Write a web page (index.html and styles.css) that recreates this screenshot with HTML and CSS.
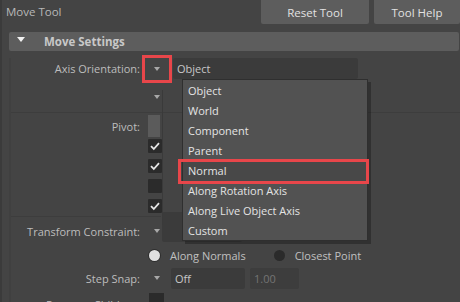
FILE: index.html
```html
<!DOCTYPE html>
<html>
<head>
<meta charset="utf-8">
<link rel="stylesheet" href="styles.css">
</head>
<body>
<div class="window">
  <div class="header">
    <div class="title">Move Tool</div>
    <button class="btn btn-reset">Reset Tool</button>
    <button class="btn btn-help">Tool Help</button>
  </div>
  <div class="section">
    <div class="section-bar"><span class="caret-down"></span><span class="section-title">Move Settings</span></div>
    <div class="content">
      <div class="row row-axis">
        <div class="label">Axis Orientation:</div>
        <div class="arrow-cell"><span class="arrow"></span></div>
        <div class="field field-object">Object</div>
      </div>
      <div class="row row-sub">
        <div class="label"></div>
        <div class="arrow-cell"><span class="arrow"></span></div>
      </div>
      <div class="sep"></div>
      <div class="row row-pivot">
        <div class="label">Pivot:</div>
        <div class="pivot-box"></div>
      </div>
      <div class="checks">
        <div class="check on"><svg viewBox="0 0 14 14" width="14" height="14"><path d="M3 7.2 L5.8 10 L11 4.2" fill="none" stroke="#e6e6e6" stroke-width="1.8"/></svg></div>
        <div class="check on"><svg viewBox="0 0 14 14" width="14" height="14"><path d="M3 7.2 L5.8 10 L11 4.2" fill="none" stroke="#e6e6e6" stroke-width="1.8"/></svg></div>
        <div class="check"></div>
        <div class="check on"><svg viewBox="0 0 14 14" width="14" height="14"><path d="M3 7.2 L5.8 10 L11 4.2" fill="none" stroke="#e6e6e6" stroke-width="1.8"/></svg></div>
      </div>
      <div class="sep sep2"></div>
      <div class="row row-tc">
        <div class="label">Transform Constraint:</div>
        <div class="arrow-cell"><span class="arrow"></span></div>
        <div class="field field-tc"></div>
      </div>
      <div class="row row-radio">
        <div class="label"></div>
        <div class="radio-group">
          <span class="radio light"></span><span class="radio-text">Along Normals</span>
          <span class="radio dark"></span><span class="radio-text">Closest Point</span>
        </div>
      </div>
      <div class="row row-snap">
        <div class="label">Step Snap:</div>
        <div class="arrow-cell"><span class="arrow"></span></div>
        <div class="field field-off">Off</div>
        <div class="field field-num">1.00</div>
      </div>
      <div class="row row-preserve">
        <div class="label">Preserve Children:</div>
        <div class="small-check"></div>
      </div>
      <div class="vline"></div>
    </div>
  </div>

  <div class="menu">
    <div class="item">Object</div>
    <div class="item">World</div>
    <div class="item">Component</div>
    <div class="item">Parent</div>
    <div class="item item-sel">Normal</div>
    <div class="item">Along Rotation Axis</div>
    <div class="item">Along Live Object Axis</div>
    <div class="item">Custom</div>
  </div>
  <div class="hl hl-arrow"></div>
  <div class="hl hl-normal"></div>
</div>
</body>
</html>
```
FILE: styles.css
```css
* { box-sizing: border-box; }
html, body {
  margin: 0;
  padding: 0;
  background: #444444;
  width: 460px;
  height: 302px;
  overflow: hidden;
}
body {
  font-family: "Open Sans", "Noto Sans", "Liberation Sans", sans-serif;
  font-size: 11px;
  color: #bdbdbd;
}
.window {
  position: relative;
  width: 460px;
  height: 302px;
  overflow: hidden;
  border-left: 2px solid #3b3b3b;
}
.header {
  display: flex;
  height: 24px;
  align-items: stretch;
}
.title {
  flex: 1;
  padding: 4px 0 0 4px;
  color: #b8b8b8;
  font-size: 11.5px;
}
.btn {
  border: none;
  background: #5d5d5d;
  color: #e2e2e2;
  font-family: inherit;
  font-size: 11.5px;
  padding: 0;
  border-radius: 0 0 2px 2px;
}
.btn-reset { width: 108px; margin-right: 5px; }
.btn-help { width: 86px; }
.section {
  margin: 8px 1px 0 7px;
}
.section-bar {
  height: 19px;
  background: #5d5d5d;
  border-radius: 2px;
  display: flex;
  align-items: center;
  font-weight: bold;
  color: #c8c8c8;
  font-size: 11.5px;
}
.caret-down {
  width: 0;
  height: 0;
  border-left: 4px solid transparent;
  border-right: 4px solid transparent;
  border-top: 5px solid #f2f2f2;
  margin: 0 0 4px 8px;
}
.section-title { margin-left: 19px; }
.content {
  position: relative;
  padding-left: 3px;
  border-left: 2px solid #404040;
  height: 260px;
}
.row {
  display: flex;
  align-items: center;
}
.label {
  width: 126px;
  text-align: right;
  flex: none;
  white-space: nowrap;
}
.arrow-cell {
  width: 34px;
  display: flex;
  justify-content: center;
  flex: none;
}
.arrow {
  width: 0;
  height: 0;
  border-left: 3px solid transparent;
  border-right: 3px solid transparent;
  border-top: 4px solid #a8a8a8;
}
.field {
  background: #3b3b3b;
  height: 21px;
  border-radius: 2px;
  padding-left: 4px;
  display: flex;
  align-items: center;
  color: #c8c8c8;
}
.row-axis { margin-top: 7px; height: 21px; }
.field-object { width: 185px; margin-left: -1px; }
.row-sub { height: 20px; margin-top: 8px; }
.sep {
  height: 1px;
  background: #3d3d3d;
  margin: 5px 0 0 -3px;
  width: 450px;
}
.row-pivot { height: 22px; margin-top: 2px; }
.pivot-box {
  width: 12px;
  height: 22px;
  background: #5b5b5b;
  margin-left: 8px;
}
.checks {
  display: flex;
  flex-direction: column;
  gap: 6px;
  margin: 2px 0 0 134px;
}
.check {
  width: 14px;
  height: 14px;
  background: #2b2b2b;
  border-radius: 1px;
}
.check svg { display: block; }
.sep2 { margin-top: 3px; width: 150px; }
.row-tc { height: 22px; margin-top: 3px; }
.row-tc .label { padding-top: 1px; }
.field-tc { width: 80px; margin-left: -12px; height: 30px; margin-top: -8px; }
.row-radio { height: 14px; margin-top: 6px; }
.radio-group {
  display: flex;
  align-items: center;
  margin-left: 9px;
}
.radio {
  width: 11px;
  height: 11px;
  border-radius: 50%;
  flex: none;
}
.radio.light { background: #e0e0e0; box-shadow: 0 0 0 1px #2e2e2e; }
.radio.dark { background: #2b2b2b; margin-left: 28px; }
.radio-text { margin-left: 10px; color: #c0c0c0; }
.row-snap { height: 22px; margin-top: 5px; }
.field-off { width: 74px; margin-left: -3px; }
.field-num { width: 49px; margin-left: 5px; color: #747474; background: #3d3d3d; }
.row-preserve { height: 16px; margin-top: 4px; align-items: flex-start; }
.row-preserve .label { padding-top: 4px; }
.small-check {
  width: 15px;
  height: 16px;
  background: #2b2b2b;
  margin-left: 9px;
}
.vline {
  position: absolute;
  left: 151px;
  top: 32px;
  width: 1px;
  height: 135px;
  background: #3a3a3a;
}
.menu {
  position: absolute;
  left: 180px;
  top: 79px;
  width: 186px;
  height: 162px;
  background: #525252;
  border: 1px solid #2f2f2f;
  box-shadow: 3px 3px 0 rgba(0, 0, 0, 0.28);
  padding-top: 1px;
}
.item {
  height: 20px;
  line-height: 20px;
  padding-left: 5px;
  color: #e4e4e4;
}
.item-sel { background: #484848; }
.hl {
  position: absolute;
  border: 3px solid #e8464a;
}
.hl-arrow { left: 140px; top: 55px; width: 30px; height: 28px; }
.hl-normal { left: 176px; top: 159px; width: 191px; height: 25px; }
```
